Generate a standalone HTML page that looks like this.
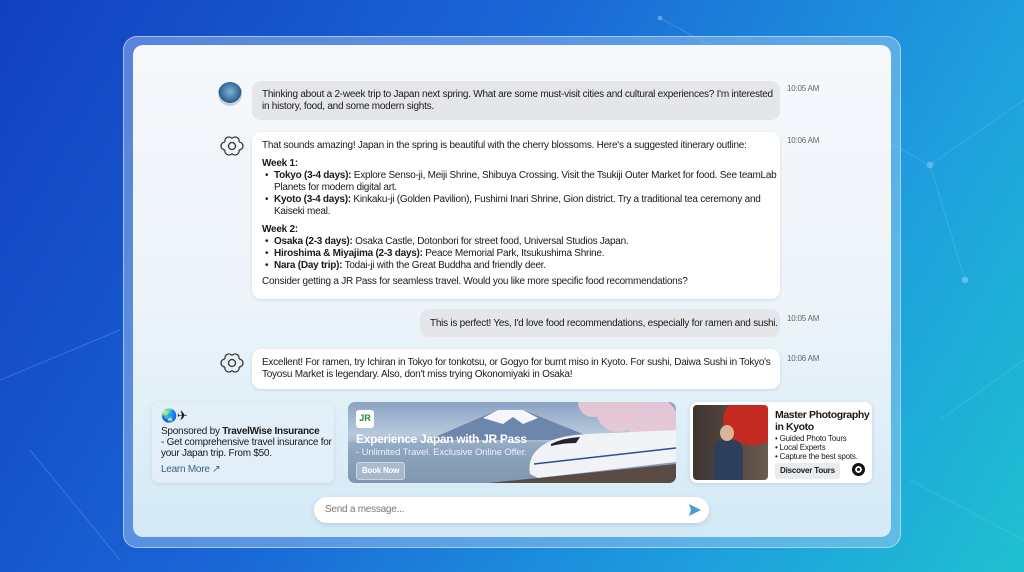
<!DOCTYPE html>
<html><head><meta charset="utf-8"><style>
*{box-sizing:border-box;margin:0;padding:0}
body{width:1024px;height:572px;overflow:hidden;font-family:"Liberation Sans",sans-serif;background:linear-gradient(120deg,#1240c0 0%,#1a66d6 40%,#1e9ede 75%,#1fc0d0 100%);position:relative;color:#1a1a1a}
.frame{position:absolute;left:123px;top:36px;width:778px;height:512px;border-radius:14px;background:rgba(170,205,245,.45);border:1px solid rgba(220,235,255,.6)}
.card{position:absolute;left:133px;top:45px;width:758px;height:492px;border-radius:10px;background:linear-gradient(180deg,#f6f8fb 0%,#eef4fa 50%,#d3eaf6 100%)}
.t{font-size:10px;letter-spacing:-0.25px;line-height:12px;white-space:nowrap}
.b{position:absolute;border-radius:9px;padding:8px 10px}
.user{background:#e4e6ea}
.ai{background:#fff;box-shadow:0 1px 3px rgba(0,0,0,.12)}
.time{position:absolute;left:787px;font-size:8px;color:#666;letter-spacing:-0.2px}
.av{position:absolute;left:218px;width:24px;height:24px;border-radius:50%}
ul{list-style:none}
li{padding-left:12px;position:relative}
li:before{content:"•";position:absolute;left:3px}
.ad{position:absolute;border-radius:7px;top:402px;height:81px}
</style></head><body>
<svg style="position:absolute;left:0;top:0" width="1024" height="572"><g stroke="rgba(150,200,255,.25)" stroke-width="1" fill="rgba(180,220,255,.4)">
<line x1="660" y1="18" x2="930" y2="165"/><line x1="930" y1="165" x2="1024" y2="100"/><line x1="930" y1="165" x2="965" y2="280"/><line x1="0" y1="380" x2="120" y2="330"/><line x1="30" y1="450" x2="120" y2="560"/><line x1="940" y1="420" x2="1024" y2="360"/><line x1="910" y1="480" x2="1024" y2="540"/>
<circle cx="930" cy="165" r="3"/><circle cx="965" cy="280" r="3"/><circle cx="660" cy="18" r="2"/><circle cx="32" cy="575" r="2"/></g></svg>
<div class="frame"></div>
<div class="card"></div>
<div class="av" style="top:82px;background:radial-gradient(circle at 50% 40%,#7fb3d8,#2b5d8a 60%,#c8d2de 61%)"></div>
<div class="b user t" style="left:252px;top:81px;width:528px;height:39px;padding-top:8px">Thinking about a 2-week trip to Japan next spring. What are some must-visit cities and cultural experiences? I'm interested<br>in history, food, and some modern sights.</div>
<div class="time" style="top:84px">10:05 AM</div>
<svg class="av" style="top:134px;left:220px" viewBox="0 0 24 24" fill="none" stroke="#333" stroke-width="1.3"><circle cx="12" cy="12" r="3.5"/><path d="M12 4.5a4 4 0 0 1 7 3.5M19 8a4 4 0 0 1 0 8M19 16a4 4 0 0 1-7 3.5M12 19.5a4 4 0 0 1-7-3.5M5 16a4 4 0 0 1 0-8M5 8a4 4 0 0 1 7-3.5"/></svg>
<div class="b ai t" style="left:252px;top:132px;width:528px;height:167px;padding-top:8px">
That sounds amazing! Japan in the spring is beautiful with the cherry blossoms. Here's a suggested itinerary outline:
<div style="height:6px"></div><b>Week 1:</b>
<ul><li><b>Tokyo (3-4 days):</b> Explore Senso-ji, Meiji Shrine, Shibuya Crossing. Visit the Tsukiji Outer Market for food. See teamLab<br>Planets for modern digital art.</li>
<li><b>Kyoto (3-4 days):</b> Kinkaku-ji (Golden Pavilion), Fushimi Inari Shrine, Gion district. Try a traditional tea ceremony and<br>Kaiseki meal.</li></ul>
<div style="height:6px"></div><b>Week 2:</b>
<ul><li><b>Osaka (2-3 days):</b> Osaka Castle, Dotonbori for street food, Universal Studios Japan.</li>
<li><b>Hiroshima &amp; Miyajima (2-3 days):</b> Peace Memorial Park, Itsukushima Shrine.</li>
<li><b>Nara (Day trip):</b> Todai-ji with the Great Buddha and friendly deer.</li></ul>
<div style="height:4px"></div>Consider getting a JR Pass for seamless travel. Would you like more specific food recommendations?</div>
<div class="time" style="top:136px">10:06 AM</div>
<div class="b user t" style="left:420px;top:309px;width:360px;height:28px;padding-top:9px">This is perfect! Yes, I'd love food recommendations, especially for ramen and sushi.</div>
<div class="time" style="top:314px">10:05 AM</div>
<svg class="av" style="top:351px;left:220px" viewBox="0 0 24 24" fill="none" stroke="#333" stroke-width="1.3"><circle cx="12" cy="12" r="3.5"/><path d="M12 4.5a4 4 0 0 1 7 3.5M19 8a4 4 0 0 1 0 8M19 16a4 4 0 0 1-7 3.5M12 19.5a4 4 0 0 1-7-3.5M5 16a4 4 0 0 1 0-8M5 8a4 4 0 0 1 7-3.5"/></svg>
<div class="b ai t" style="left:252px;top:349px;width:528px;height:40px;padding-top:8px">Excellent! For ramen, try Ichiran in Tokyo for tonkotsu, or Gogyo for burnt miso in Kyoto. For sushi, Daiwa Sushi in Tokyo's<br>Toyosu Market is legendary. Also, don't miss trying Okonomiyaki in Osaka!</div>
<div class="time" style="top:354px">10:06 AM</div>

<div class="ad t" style="left:152px;width:182px;background:#e2eff9;box-shadow:0 1px 4px rgba(0,0,0,.1);padding:8px 9px;line-height:11px">
<div style="font-size:13px;height:16px">🌏✈</div>
Sponsored by <b>TravelWise Insurance</b><br>- Get comprehensive travel insurance for<br>your Japan trip. From $50.<div style="color:#3a5f8a;margin-top:5px">Learn More ↗</div></div>

<div class="ad" style="left:348px;width:328px;overflow:hidden;background:linear-gradient(180deg,#8aa3c4 0%,#b8c9dc 40%,#8da3bb 60%,#6a7f96 100%)">
<svg width="328" height="81" style="position:absolute;left:0;top:0">
<polygon points="80,38 150,8 175,8 250,38" fill="#6d86ab"/><polygon points="135,16 150,8 175,8 190,16 175,22 165,15 155,22" fill="#f4f6fa"/>
<rect x="0" y="40" width="328" height="41" fill="#8ea6c0" opacity=".6"/>
<g fill="#ecc9d6" opacity=".9"><circle cx="270" cy="8" r="22"/><circle cx="305" cy="20" r="25"/><circle cx="320" cy="45" r="15"/><circle cx="245" cy="0" r="15"/></g>
<path d="M140 81 L328 62 L328 81Z" fill="#5a4b44"/>
<path d="M182 72 Q178 52 200 40 Q215 33 240 32 L328 28 L328 60 L190 76 Z" fill="#f2f3f6"/>
<path d="M186 62 L328 46" stroke="#2a4d9a" stroke-width="1.5"/><path d="M203 42 Q215 36 232 35 L228 41 Q215 41 203 44Z" fill="#223"/></svg>
<div style="position:absolute;left:8px;top:8px;width:18px;height:18px;background:#fff;border-radius:3px;color:#1b8a3a;font-weight:bold;font-size:9px;text-align:center;line-height:17px">JR</div>
<div class="t" style="position:absolute;left:8px;top:31px;color:#fff;font-size:12px;font-weight:bold;letter-spacing:-0.3px">Experience Japan with JR Pass</div>
<div class="t" style="position:absolute;left:8px;top:45px;color:#eef;font-size:9.5px;letter-spacing:-0.1px">- Unlimited Travel. Exclusive Online Offer.</div>
<div class="t" style="position:absolute;left:8px;top:60px;background:rgba(255,255,255,.3);color:#fff;font-size:8px;font-weight:bold;padding:2px 5px;border-radius:3px;border:1px solid rgba(255,255,255,.4)">Book Now</div></div>

<div class="ad" style="left:690px;width:182px;background:#fff;box-shadow:0 1px 4px rgba(0,0,0,.12)">
<div style="position:absolute;left:3px;top:3px;width:75px;height:75px;border-radius:4px;overflow:hidden;background:linear-gradient(90deg,#3d3430,#6b5a4f)">
<div style="position:absolute;left:30px;top:-10px;width:60px;height:50px;border-radius:50%;background:#c42a22"></div>
<div style="position:absolute;left:20px;top:35px;width:30px;height:45px;background:#2e3f5c;border-radius:10px 10px 0 0"></div>
<div style="position:absolute;left:27px;top:20px;width:14px;height:16px;background:#d9b49a;border-radius:50%"></div></div>
<div class="t" style="position:absolute;left:85px;top:7px;font-weight:bold;font-size:10.5px;line-height:12px;letter-spacing:-0.4px">Master Photography<br>in Kyoto</div>
<div class="t" style="position:absolute;left:85px;top:32px;font-size:8px;line-height:9px;letter-spacing:-0.2px">• Guided Photo Tours<br>• Local Experts<br>• Capture the best spots.</div>
<div class="t" style="position:absolute;left:85px;top:61px;background:#e9ecef;font-size:8px;font-weight:bold;padding:2px 5px;border-radius:3px;letter-spacing:-0.2px">Discover Tours</div>
<div style="position:absolute;left:162px;top:61px;width:13px;height:13px;border-radius:50%;background:#111;border:3px solid #111;box-shadow:inset 0 0 0 2px #fff"></div></div>

<div style="position:absolute;left:314px;top:497px;width:395px;height:26px;background:#fff;border-radius:13px;box-shadow:0 2px 6px rgba(0,60,120,.15)"></div>
<div class="t" style="position:absolute;left:325px;top:504px;color:#777">Send a message...</div>
<svg style="position:absolute;left:688px;top:503px" width="14" height="14" viewBox="0 0 14 14"><path d="M1 1 L13 7 L1 13 L3 7Z" fill="#4a9ad4"/></svg>
</body></html>
